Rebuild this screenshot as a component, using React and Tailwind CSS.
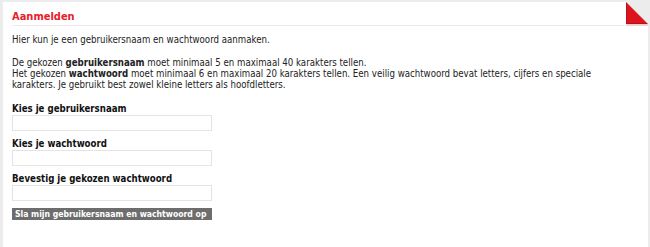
import React from 'react';

const Field = ({ label, type = 'text', className = '' }) => (
  <div className={className}>
    <label className="block font-bold text-[#111] leading-[12px]">{label}</label>
    <input
      type={type}
      className="block w-[200px] h-[16px] border border-[#e4e4e4] bg-white outline-none"
    />
  </div>
);

const App = () => {
  return (
    <div
      className="w-[650px] h-[247px] bg-[#ececec] pt-[2px] pl-[3px] pr-[2px] overflow-hidden"
      style={{ fontFamily: '"DejaVu Sans Condensed", "DejaVu Sans", Verdana, sans-serif', fontStretch: 'condensed' }}
    >
      <div className="relative h-full bg-white pl-[9px] text-[9.6px] text-[#222]">
        <div className="mr-[24px] pt-[9px] pb-[2px] border-b border-[#ebebeb]">
          <h1 className="text-[11px] font-bold text-[#e8202a] leading-[12px]">Aanmelden</h1>
        </div>

        <svg className="absolute top-0 right-0" width="22" height="24" viewBox="0 0 22 24">
          <polygon points="0,0 22,22 22,0" fill="#ececec" />
          <polygon points="1,1 21,21 1,21" fill="#dc141c" />
          <polygon points="0,0 1,1 1,21 21,21 22,22 0,22" fill="#b3121a" />
          <rect x="0" y="22" width="22" height="2" fill="#e6a0a0" opacity="0.5" />
        </svg>

        <p className="mt-[8px] leading-[11px]">Hier kun je een gebruikersnaam en wachtwoord aanmaken.</p>

        <p className="mt-[12px] leading-[11px] max-w-[600px]">
          De gekozen <b>gebruikersnaam</b> moet minimaal 5 en maximaal 40 karakters tellen.
          <br />
          Het gekozen <b>wachtwoord</b> moet minimaal 6 en maximaal 20 karakters tellen. Een veilig wachtwoord bevat letters, cijfers en speciale karakters. Je gebruikt best zowel kleine letters als hoofdletters.
        </p>

        <Field label="Kies je gebruikersnaam" className="mt-[13px]" />
        <Field label="Kies je wachtwoord" type="password" className="mt-[7px]" />
        <Field label="Bevestig je gekozen wachtwoord" type="password" className="mt-[7px]" />

        <button className="mt-[7px] block w-[200px] h-[12px] whitespace-nowrap text-left bg-[#6d6d6d] text-white font-bold text-[8.6px] leading-[12px] px-[3px]">
          Sla mijn gebruikersnaam en wachtwoord op
        </button>
      </div>
    </div>
  );
};

export default App;
